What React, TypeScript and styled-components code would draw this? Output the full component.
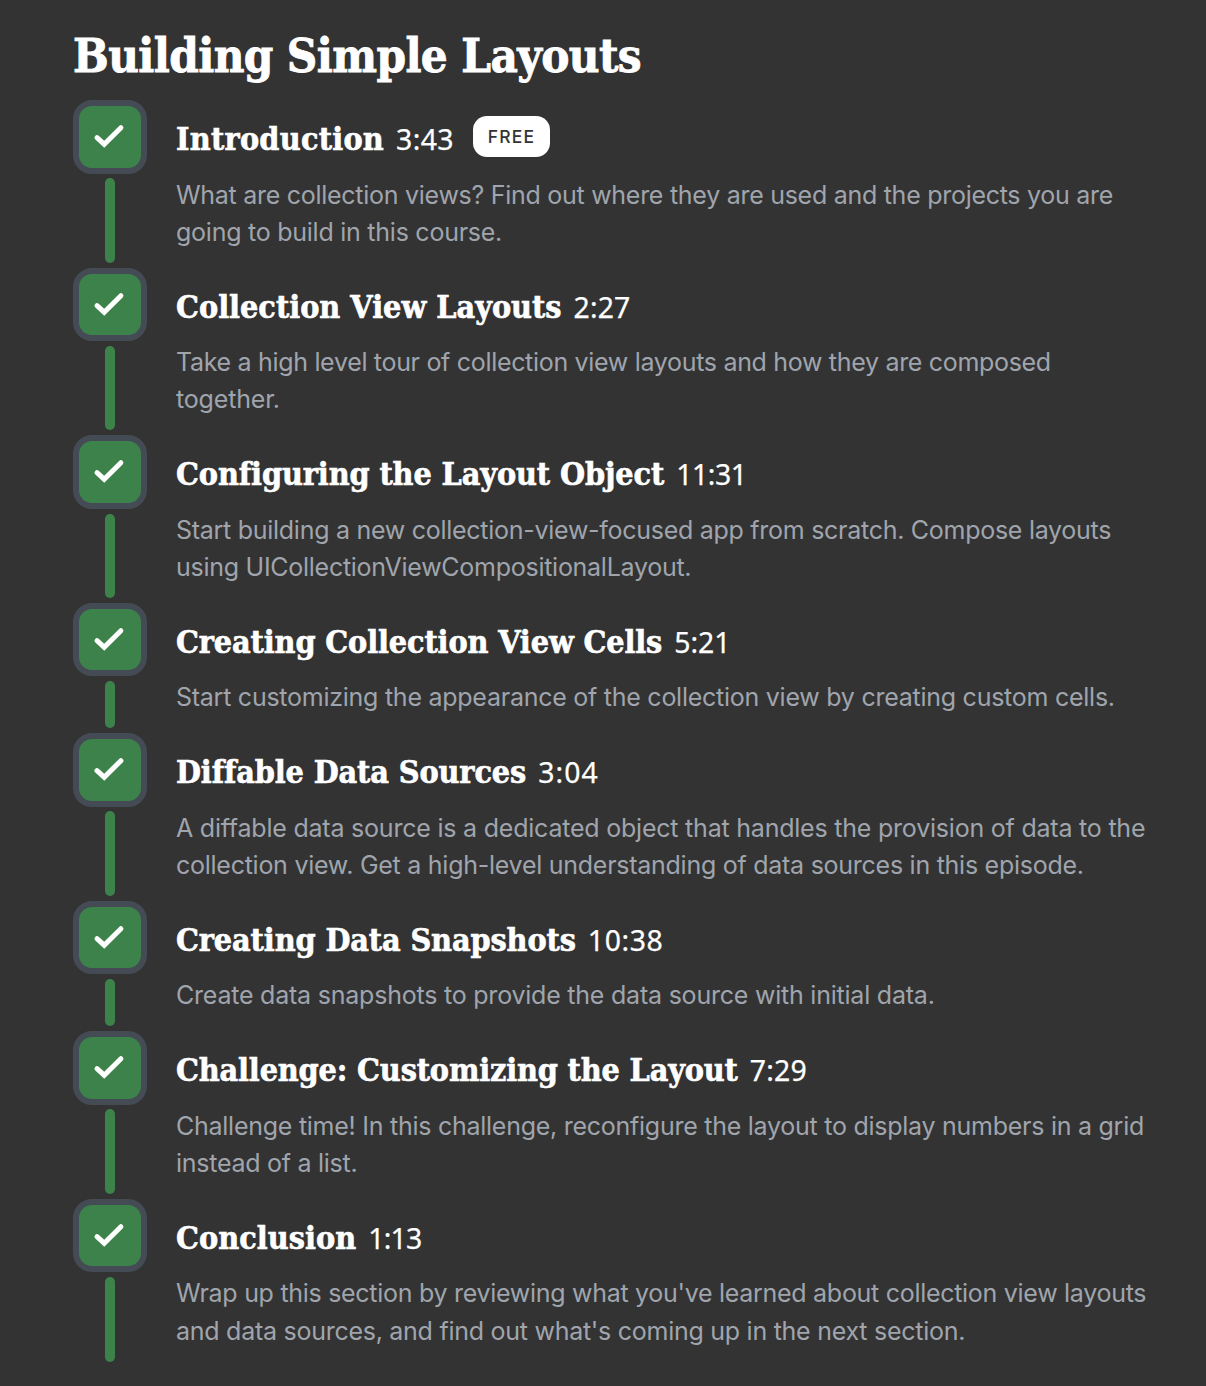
import React from 'react';
import styled, { createGlobalStyle } from 'styled-components';

const GlobalStyle = createGlobalStyle`
  *, *::before, *::after { box-sizing: border-box; }
  body { margin: 0; background: #333333; }
`;

const Page = styled.main`
  min-height: 1386px;
  padding: 27px 48px 0 73px;
  background: #333333;
  color: #ffffff;
  -webkit-font-smoothing: antialiased;
`;

const slab = `
  font-family: 'DejaVu Serif Condensed', 'DejaVu Serif', serif;
  font-stretch: condensed;
  font-weight: 700;
`;

const SectionTitle = styled.h1`
  ${slab}
  margin: 0;
  height: 73px;
  padding-top: 1px;
  line-height: 56px;
  font-size: 47px;
  letter-spacing: -0.6px;
  white-space: nowrap;
  -webkit-text-stroke: 0.8px #ffffff;
`;

const EpisodeList = styled.ol`
  margin: 0;
  padding: 0;
  list-style: none;
`;

const Episode = styled.li`
  display: flex;
  gap: 29px;
`;

const Track = styled.div`
  display: flex;
  flex-direction: column;
  align-items: center;
  width: 74px;
  padding-bottom: 5px;
`;

const Tile = styled.div`
  display: flex;
  flex: none;
  width: 74px;
  height: 73.5px;
  border: 6px solid #454b54;
  border-radius: 19px;
  background: #454b54;
`;

const TileFace = styled.div`
  flex: 1;
  border-radius: 13px;
  background: #3e824b;
`;

const Connector = styled.div`
  flex: 1;
  width: 10px;
  margin-top: 4.7px;
  border-radius: 5px;
  background: #3e824b;
`;

const Body = styled.div`
  flex: 1;
  padding-bottom: 16.5px;
`;

const Heading = styled.div`
  display: flex;
  align-items: baseline;
  height: 76.5px;
  padding-top: 16px;
  line-height: 46px;
  white-space: nowrap;
`;

const EpisodeTitle = styled.h2<{ $spacing: number }>`
  ${slab}
  margin: 0;
  font-size: 32px;
  letter-spacing: ${(p) => p.$spacing}px;
  -webkit-text-stroke: 0.6px #ffffff;
`;

const Duration = styled.span<{ $spacing: number }>`
  margin-left: 12px;
  font-family: 'Noto Sans', sans-serif;
  font-size: 28.4px;
  letter-spacing: ${(p) => p.$spacing}px;
  -webkit-text-stroke: 0.25px #ffffff;
`;

const FreeBadge = styled.span`
  align-self: flex-start;
  width: 77px;
  height: 41px;
  margin-left: 19px;
  border-radius: 14px;
  background: #ffffff;
  color: #333333;
  font: 500 17.5px/42px Inter, sans-serif;
  letter-spacing: 1.2px;
  text-align: center;
`;

const Description = styled.p`
  margin: 0;
  color: #a0a5ad;
  font: 400 25px/37.33px Inter, sans-serif;
`;

const Line = styled.span<{ $spacing: number }>`
  display: block;
  white-space: nowrap;
  letter-spacing: ${(p) => p.$spacing}px;
`;

type SpacedText = [text: string, spacing: number];

interface EpisodeData {
  title: SpacedText;
  duration: SpacedText;
  free?: boolean;
  lines: SpacedText[];
}

const episodes: EpisodeData[] = [
  {
    title: ['Introduction', 0.25],
    duration: ['3:43', 0.4],
    free: true,
    lines: [
      ['What are collection views? Find out where they are used and the projects you are', -0.278],
      ['going to build in this course.', -0.25],
    ],
  },
  {
    title: ['Collection View Layouts', 0.01],
    duration: ['2:27', 0.1],
    lines: [
      ['Take a high level tour of collection view layouts and how they are composed', -0.315],
      ['together.', -0.17],
    ],
  },
  {
    title: ['Configuring the Layout Object', -0.1],
    duration: ['11:31', -0.4],
    lines: [
      ['Start building a new collection-view-focused app from scratch. Compose layouts', -0.275],
      ['using UICollectionViewCompositionalLayout.', -0.27],
    ],
  },
  {
    title: ['Creating Collection View Cells', -0.12],
    duration: ['5:21', 0],
    lines: [['Start customizing the appearance of the collection view by creating custom cells.', -0.255]],
  },
  {
    title: ['Diffable Data Sources', -0.11],
    duration: ['3:04', 1.1],
    lines: [
      ['A diffable data source is a dedicated object that handles the provision of data to the', -0.215],
      ['collection view. Get a high-level understanding of data sources in this episode.', -0.262],
    ],
  },
  {
    title: ['Creating Data Snapshots', -0.11],
    duration: ['10:38', 0.6],
    lines: [['Create data snapshots to provide the data source with initial data.', -0.22]],
  },
  {
    title: ['Challenge: Customizing the Layout', -0.15],
    duration: ['7:29', 0.2],
    lines: [
      ['Challenge time! In this challenge, reconfigure the layout to display numbers in a grid', -0.26],
      ['instead of a list.', -0.27],
    ],
  },
  {
    title: ['Conclusion', 0.05],
    duration: ['1:13', -0.8],
    lines: [
      ["Wrap up this section by reviewing what you've learned about collection view layouts", -0.29],
      ["and data sources, and find out what's coming up in the next section.", -0.265],
    ],
  },
];

const CheckIcon = () => (
  <svg width="62" height="62" viewBox="0 0 62 62" fill="none" aria-hidden="true">
    <path
      d="M18 31.6L25.2 38.2L41.9 21.7"
      stroke="#ffffff"
      strokeWidth="5"
      strokeLinecap="round"
      strokeLinejoin="miter"
    />
  </svg>
);

export default function App() {
  return (
    <Page>
      <GlobalStyle />
      <SectionTitle>Building Simple Layouts</SectionTitle>
      <EpisodeList>
        {episodes.map(({ title, duration, free, lines }) => (
          <Episode key={title[0]}>
            <Track>
              <Tile>
                <TileFace>
                  <CheckIcon />
                </TileFace>
              </Tile>
              <Connector />
            </Track>
            <Body>
              <Heading>
                <EpisodeTitle $spacing={title[1]}>{title[0]}</EpisodeTitle>
                <Duration $spacing={duration[1]}>{duration[0]}</Duration>
                {free && <FreeBadge>FREE</FreeBadge>}
              </Heading>
              <Description>
                {lines.map(([text, spacing]) => (
                  <Line key={text} $spacing={spacing}>{text}</Line>
                ))}
              </Description>
            </Body>
          </Episode>
        ))}
      </EpisodeList>
    </Page>
  );
}
